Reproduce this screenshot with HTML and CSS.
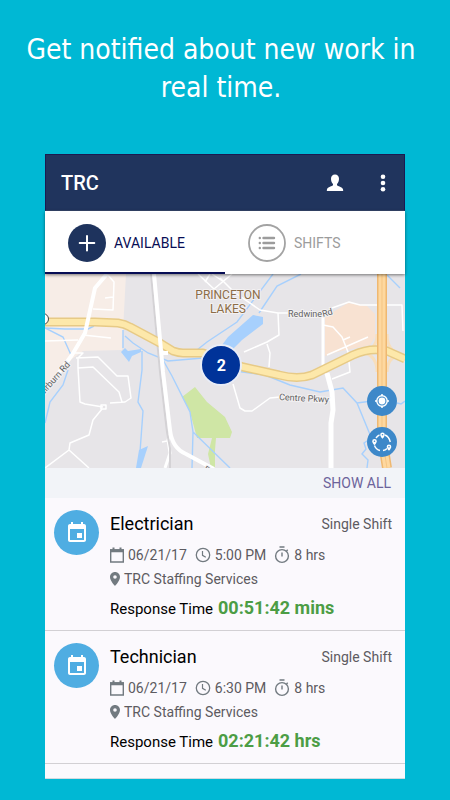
FILE: index.html
```html
<!DOCTYPE html>
<html lang="en">
<head>
  <meta charset="UTF-8">
  <meta name="viewport" content="width=device-width, initial-scale=1.0">
  <title>TRC</title>
  <link rel="stylesheet" href="styles.css">
</head>
<body>
  <!-- shared icons -->
  <svg class="sprite" aria-hidden="true">
    <symbol id="icon-event" viewBox="0 0 24 24">
      <path fill="currentColor" d="M17 12h-5v5h5v-5zM16 1v2H8V1H6v2H5c-1.100 0-2 .9-2 2v14c0 1.100.9 2 2 2h14c1.100 0 2-.9 2-2V5c0-1.100-.9-2-2-2h-1V1h-2zm3 18H5V8h14v11z"/>
    </symbol>
    <symbol id="icon-date" viewBox="0 0 14 16">
      <path fill="none" stroke="currentColor" stroke-width="1.400" d="M.700 3h12.600v12H.700z"/>
      <path fill="currentColor" d="M0 2.300h14v3H0zM2.500.500h2v2h-2zM9.500.500h2v2h-2z"/>
    </symbol>
    <symbol id="icon-clock" viewBox="0 0 16 16">
      <circle cx="8" cy="8" r="6.700" fill="none" stroke="currentColor" stroke-width="1.300"/>
      <path fill="none" stroke="currentColor" stroke-width="1.200" d="M7.500 4v4.300l3.300 2"/>
    </symbol>
    <symbol id="icon-timer" viewBox="0 0 16 18">
      <circle cx="8" cy="10" r="6.400" fill="none" stroke="currentColor" stroke-width="1.400"/>
      <path fill="none" stroke="currentColor" stroke-width="1.400" d="M5.500 1h5M8 6.500v4M12.500 5l1.200-1.200"/>
    </symbol>
    <symbol id="icon-place" viewBox="0 0 10 14">
      <path fill="currentColor" fill-rule="evenodd" d="M5 0C2.200 0 0 2.200 0 5c0 3.700 5 9 5 9s5-5.300 5-9c0-2.800-2.200-5-5-5zm0 6.800a1.800 1.800 0 1 1 0-3.600 1.800 1.800 0 0 1 0 3.600z"/>
    </symbol>
  </svg>

  <h1 class="headline">Get notified about new work in real time.</h1>

  <main class="phone">
    <header class="app-bar">
      <h2 class="app-title">TRC</h2>
      <button class="bar-button" type="button" aria-label="Profile">
        <svg width="18" height="18" viewBox="0 0 18 18"><path fill="#fff" d="M9 .5C6.500.5 5 2.300 5 4.800c0 2.200.7 4 2 5.200v1.200c-.5.900-5.500 1.600-6 4-.1.600-.2 1.300-.2 1.800h16.400c0-.5-.1-1.200-.2-1.800-.5-2.400-5.500-3.100-6-4V10c1.300-1.200 2-3 2-5.200C13 2.300 11.500.5 9 .5z"/></svg>
      </button>
      <button class="bar-button" type="button" aria-label="More options">
        <svg width="18" height="18" viewBox="0 0 18 18"><g fill="#fff"><circle cx="9" cy="2.800" r="2.300"/><circle cx="9" cy="9" r="2.300"/><circle cx="9" cy="15.200" r="2.300"/></g></svg>
      </button>
    </header>

    <nav class="tabs">
      <button class="tab active" type="button">
        <svg width="38" height="38" viewBox="0 0 38 38"><circle cx="19" cy="19" r="19" fill="#1e335d"/><path stroke="#fff" stroke-width="2" stroke-linecap="round" d="M19 12v14.500M11.700 19h14.600"/></svg>
        AVAILABLE
      </button>
      <button class="tab" type="button">
        <svg width="38" height="38" viewBox="0 0 38 38"><circle cx="19" cy="19" r="18" fill="none" stroke="#a3a3a3" stroke-width="1.800"/><g stroke="#9c9c9c" stroke-width="2.400" stroke-linecap="round"><path d="M15.500 14h10.500M15.500 19h10.500M15.500 24h10.500M11.800 14h.01M11.800 19h.01M11.800 24h.01"/></g></svg>
        SHIFTS
      </button>
    </nav>

    <section class="map">
      <svg class="map-canvas" viewBox="0 0 360 194" role="img" aria-label="Map of Princeton Lakes">
        <rect width="360" height="194" fill="#e7e5e8"/>
        <path fill="#f7ede7" d="M0 0h81l-4 76-39 1-11 8-27 34z"/>
        <path fill="#f8e2d2" d="M280 43l23-14 19 3 8 8v23l-5 8-33 7-12 4z"/>
        <path fill="#cfe6a5" d="M150 113l12 15 18 15 7 15-2 6h-14l-1 12v18h-4l-3-14 4-16h-15l-7-26-8-15z"/>
        <!-- water -->
        <g fill="#a7d0fd">
          <path d="M174 75l9-12 25-22 10 2v7l-21 16-10 10z"/>
          <path d="M76 78l4-4 3 3 13-2v3l-9 4-3 6z"/>
          <path d="M94 176l9-4-7 22h-5z"/>
        </g>
        <g fill="none" stroke="#a7d0fd" stroke-width="1.400">
          <path d="M0 54l20 1h23l6-3M0 54l18 9 8 18M23 96l-5 15-13 17-5 21"/>
          <path d="M78 56v18M80 62l8 7 15 10 20 8 35-3M97 77v19l-4 32 5 9-3 41"/>
          <path d="M118 86l9 16 18 36 3 20 37 36M148 158l-1 36M152 76l10-8 30-20 36-48M214 39l18-27 24-12"/>
          <path d="M190 97l30 4 25 10 30 7 23-4 14 15 14 34M312 129l15-2M325 165l-6 4 2 6-4 5 6 6-1 8M352 129l4 1 4-3M342 1l13 13"/>
        </g>
        <!-- local roads -->
        <g fill="none" stroke="#fff" stroke-width="1.500" stroke-linejoin="round">
          <path d="M63 1l6 7-1 28-20-1M60 24l8-1M0 67l33-1M38 61l28 3"/>
          <path d="M29 79l9 0-5 5 0 10 2 34 5 2 18 3M31 84l22-1 19 19 11 0 3 22-6 4-15 1M33 94l15-1 26 25 3 10"/>
          <path d="M56 131h5v4h-5zM57 135l-9 11-4 15-19 8-1 7-24 18M24 176l20 18"/>
          <path d="M153 0l16 15 18-15M160 8l5-8M167 0l12 8M175 4l14 14 26 18 18 3h12M233 39l1 22-12 7-23 10M222 70l3 9-1 14"/>
          <path d="M287 34l17-6 11 3h42l1 26M278 51l10 2 9 10 6 15 2 20-18 7M282 81l41-18M298 66l7-3"/>
          <path d="M188 110l7 24 5 3h7l18-13 10-1M278 126h8M117 168l5-1"/>
        </g>
        <path fill="none" stroke="#fff" stroke-width="3" d="M278 43v51M125 160l-2 6 2 13-5 15"/>
        <path fill="none" stroke="#d4d2d5" stroke-width="2" d="M106 0l9 98 7 60 3 16v20"/>
        <!-- highways -->
        <path fill="none" stroke="#f8dfbd" stroke-width="3" d="M332 60c0 12-5 15-14 18M342 60c0 12 5 18 13 20M332 98c0-12-5-17-12-19M342 98c0-10 4-15 12-18"/>
        <g fill="none" stroke-linejoin="round">
          <path stroke="#e7ca86" stroke-width="9" d="M0 48h50l23 1q7 1 12 4l30 16 13 8q6 2 10 2h20l40 14 36 8q19 5 33 0l41-20q17-8 34-4l18 8"/>
          <path stroke="#fde8aa" stroke-width="6" d="M0 48h50l23 1q7 1 12 4l30 16 13 8q6 2 10 2h20l40 14 36 8q19 5 33 0l41-20q17-8 34-4l18 8"/>
          <path stroke="#efb871" stroke-width="10" d="M337 0v163l5 31"/>
          <path stroke="#fed89f" stroke-width="7" d="M337 0v163l5 31"/>
          <path stroke="#f5c583" stroke-width="1" d="M337 0v163l5 31"/>
        </g>
        <g fill="none" stroke="#fff" stroke-linejoin="round">
          <path stroke-width="4" d="M62 0L50 14 40 59 27 81 0 117"/>
          <path stroke-width="4" d="M109 0l9 98 7 58q2 18 16 24l28 15M118 79l5 0"/>
          <path stroke-width="5" d="M282 99l5 19 1 18-2 13v45"/>
        </g>
        <circle cx="-2" cy="45" r="5.500" fill="#fff" stroke="#444" stroke-width="1"/>
        <g class="map-label">
          <text class="area" x="183" y="25">PRINCETON</text>
          <text class="area" x="183" y="39">LAKES</text>
          <text transform="translate(278 43) rotate(-15)">Rd</text>
          <text transform="translate(243 43)">Redwine</text>
          <text transform="translate(234 126) rotate(3)">Centre Pkwy</text>
          <text transform="translate(-5 125) rotate(-48)">Fairburn Rd</text>
          <text transform="translate(158 197) rotate(30)">Rd</text>
        </g>
      </svg>
      <button class="cluster" type="button">2</button>
      <div class="map-controls">
        <button class="map-button" type="button" aria-label="My location">
          <svg width="30" height="30" viewBox="0 0 30 30"><circle cx="15" cy="15" r="5.200" fill="none" stroke="#fff" stroke-width="1.400"/><circle cx="15" cy="15" r="3.400" fill="#fff"/><path stroke="#fff" stroke-width="1.500" d="M15 8v2M15 20v2M8 15h2M20 15h2"/></svg>
        </button>
        <button class="map-button" type="button" aria-label="Nearby places">
          <svg width="30" height="30" viewBox="0 0 30 30">
            <path fill="none" stroke="#fff" stroke-width="1.400" d="M9 11q1.500-2.300 3.500-3M18 8q4 1.500 5.300 7M20 21.500q-1.500 1.700-4 2M13 23.500q-4-1-5.500-5"/>
            <path id="pin" fill="#fff" fill-rule="evenodd" d="M15.500 5.500a2.300 2.300 0 0 0-2.300 2.300c0 1.700 2.300 4 2.300 4s2.300-2.300 2.300-4a2.300 2.300 0 0 0-2.300-2.300zm0 1.500a.8.800 0 1 1 0 1.600.8.800 0 0 1 0-1.600z"/>
            <use href="#pin" x="-8" y="6.500"/><use href="#pin" x="6.500" y="12"/>
          </svg>
        </button>
      </div>
    </section>

    <div class="show-all"><a href="#jobs">SHOW ALL</a></div>

    <section class="jobs" id="jobs">
      <article class="job">
        <div class="job-badge"><svg width="24" height="24"><use href="#icon-event"/></svg></div>
        <div class="job-body">
          <div class="job-head"><h3>Electrician</h3><span>Single Shift</span></div>
          <div class="job-meta">
            <span class="item"><svg width="14" height="16"><use href="#icon-date"/></svg>06/21/17</span>
            <span class="item"><svg width="16" height="16"><use href="#icon-clock"/></svg>5:00 PM</span>
            <span class="item"><svg width="16" height="18"><use href="#icon-timer"/></svg>8 hrs</span>
          </div>
          <div class="job-meta"><span class="item"><svg width="10" height="14"><use href="#icon-place"/></svg>TRC Staffing Services</span></div>
          <p class="response">Response Time <strong>00:51:42 mins</strong></p>
        </div>
      </article>

      <article class="job">
        <div class="job-badge"><svg width="24" height="24"><use href="#icon-event"/></svg></div>
        <div class="job-body">
          <div class="job-head"><h3>Technician</h3><span>Single Shift</span></div>
          <div class="job-meta">
            <span class="item"><svg width="14" height="16"><use href="#icon-date"/></svg>06/21/17</span>
            <span class="item"><svg width="16" height="16"><use href="#icon-clock"/></svg>6:30 PM</span>
            <span class="item"><svg width="16" height="18"><use href="#icon-timer"/></svg>8 hrs</span>
          </div>
          <div class="job-meta"><span class="item"><svg width="10" height="14"><use href="#icon-place"/></svg>TRC Staffing Services</span></div>
          <p class="response">Response Time <strong>02:21:42 hrs</strong></p>
        </div>
      </article>
    </section>
  </main>
</body>
</html>
```

FILE: styles.css
```css
* {
  box-sizing: border-box;
}

body {
  margin: 0;
  background-color: #00b8d4;
  font-family: Roboto, "Liberation Sans", sans-serif;
  font-size: 14px;
}

h1, h2, h3, p {
  margin: 0;
}

svg {
  display: block;
  flex-shrink: 0;
}

button {
  border: none;
  padding: 0;
  background: none;
  font-family: inherit;
  cursor: pointer;
}

.sprite {
  display: none;
}

.headline {
  padding: 31px 24px 47px 16px;
  color: #fff;
  font-family: "DejaVu Sans Condensed", "DejaVu Sans", sans-serif;
  font-size: 28px;
  font-weight: normal;
  line-height: 38px;
  text-align: center;
}

.phone {
  margin: 0 10%;
  background-color: #fbf9fd;
}

/* App bar */
.app-bar {
  display: flex;
  align-items: center;
  height: 57px;
  padding: 0 12px 0 15px;
  border: 1px solid #1b1a50;
  border-bottom-color: #34466b;
  background-color: #20345d;
  color: #fff;
}

.app-title {
  flex: 1;
  font-size: 20px;
  font-weight: 500;
}

.bar-button {
  margin-left: 30px;
}

/* Tabs */
.tabs {
  display: flex;
  position: relative;
  background-color: #fff;
  box-shadow: 0 1px 3px rgba(0, 0, 0, 0.5);
  z-index: 1;
}

.tab {
  display: flex;
  flex: 1;
  align-items: center;
  gap: 8px;
  height: 63px;
  padding: 2px 23px 0;
  border-bottom: 2px solid transparent;
  color: #9c9c9c;
  font-size: 14px;
}

.tab.active {
  border-bottom-color: #070d54;
  color: #070d54;
}

/* Map */
.map {
  position: relative;
}

.map-canvas {
  width: 100%;
  height: auto;
}

.map-label {
  fill: #626262;
  stroke: #f3f1f2;
  stroke-width: 2px;
  paint-order: stroke;
  font-size: 9px;
}

.map-label .area {
  fill: #8c6d48;
  font-size: 12px;
  text-anchor: middle;
}

.cluster {
  position: absolute;
  top: 47%;
  left: 49%;
  width: 42px;
  height: 42px;
  transform: translate(-50%, -50%);
  border: 2px solid #e9edf7;
  border-radius: 50%;
  background-color: #003399;
  color: #fff;
  font-size: 16px;
  font-weight: bold;
}

.map-controls {
  display: flex;
  position: absolute;
  right: 8px;
  bottom: 11px;
  flex-direction: column;
  gap: 11px;
}

.map-button {
  border-radius: 50%;
  background-color: #3d88c9;
}

.show-all {
  padding: 1px 14px 0;
  background-color: #f2f4f8;
  line-height: 29px;
  text-align: right;
}

.show-all a {
  color: #6c639b;
  text-decoration: none;
}

/* Job list */
.jobs {
  padding-bottom: 14px;
  border-bottom: 1px solid #d3dbe0;
}

.job {
  display: flex;
  gap: 11px;
  padding: 12px 13px 10px 9px;
  border-bottom: 1px solid #d2d0d4;
}

.job-badge {
  display: flex;
  align-items: center;
  justify-content: center;
  width: 45px;
  height: 45px;
  border-radius: 50%;
  background-color: #4fade2;
  color: #fff;
}

.job-body {
  flex: 1;
  padding-top: 2px;
  color: #5d5b61;
  line-height: 24px;
}

.job-head {
  display: flex;
  justify-content: space-between;
  margin-bottom: 7px;
}

.job-head h3 {
  color: #000;
  font-size: 18px;
  font-weight: normal;
}

.job-meta {
  display: flex;
  gap: 8px;
}

.item {
  display: flex;
  align-items: center;
  gap: 4px;
}

.item svg {
  color: #727a80;
}

.response {
  display: flex;
  align-items: baseline;
  gap: 5px;
  height: 24px;
  margin-top: 5px;
  color: #000;
  font-size: 15px;
}

.response strong {
  color: #4c9d45;
  font-size: 18px;
}
```
